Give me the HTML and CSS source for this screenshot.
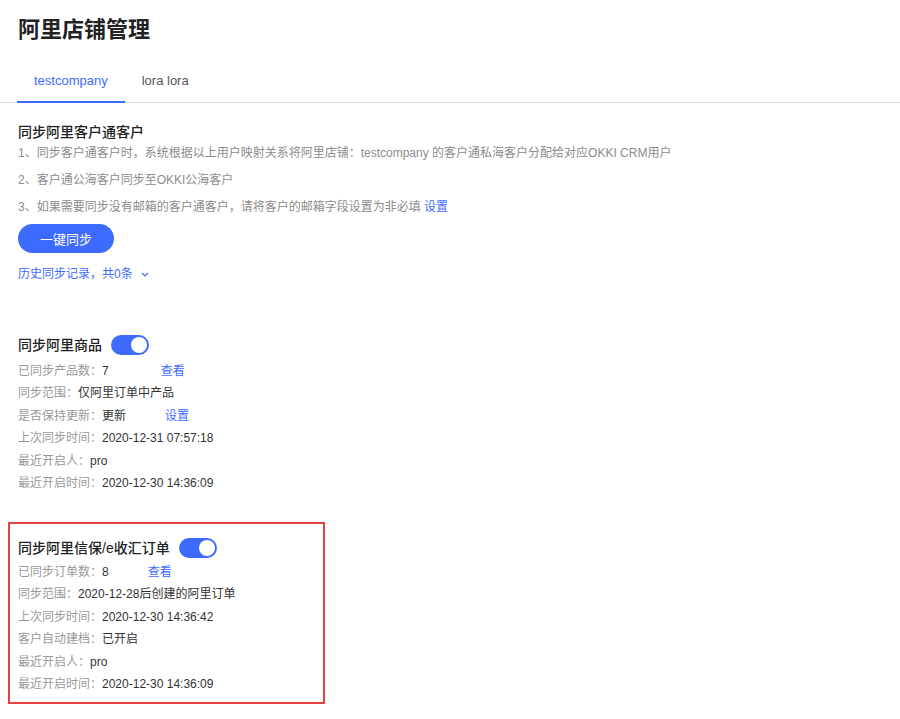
FILE: index.html
```html
<!DOCTYPE html>
<html lang="zh-CN">
<head>
  <meta charset="UTF-8" />
  <meta name="viewport" content="width=device-width, initial-scale=1.0" />
  <title>阿里店铺管理</title>
  <link rel="stylesheet" href="styles.css">
</head>
<body>
  <h1 class="page-title">阿里店铺管理</h1>

  <div class="tabs">
    <div class="tab active">testcompany</div>
    <div class="tab">lora lora</div>
  </div>

  <div class="content">
    <!-- 客户通 -->
    <section class="block customers">
      <h3 class="block-title">同步阿里客户通客户</h3>
      <p class="tip first">1、同步客户通客户时，系统根据以上用户映射关系将阿里店铺：testcompany 的客户通私海客户分配给对应OKKI CRM用户</p>
      <p class="tip">2、客户通公海客户同步至OKKI公海客户</p>
      <p class="tip">3、如果需要同步没有邮箱的客户通客户，请将客户的邮箱字段设置为非必填 <a class="link">设置</a></p>
      <button class="btn-primary">一键同步</button>
      <a class="history">历史同步记录，共0条
        <svg width="8" height="5" viewBox="0 0 8 5"><path d="M1 1 L4 4 L7 1" fill="none" stroke="currentColor" stroke-width="1.2"/></svg>
      </a>
    </section>

    <!-- 商品 -->
    <section class="block goods">
      <div class="block-head">
        <h3 class="block-title">同步阿里商品</h3>
        <span class="switch on"></span>
      </div>
      <div class="row"><span class="label">已同步产品数：</span><span class="value">7</span><a class="link far">查看</a></div>
      <div class="row"><span class="label">同步范围：</span><span class="value">仅阿里订单中产品</span></div>
      <div class="row"><span class="label">是否保持更新：</span><span class="value">更新</span><a class="link near">设置</a></div>
      <div class="row"><span class="label">上次同步时间：</span><span class="value">2020-12-31 07:57:18</span></div>
      <div class="row"><span class="label">最近开启人：</span><span class="value">pro</span></div>
      <div class="row"><span class="label">最近开启时间：</span><span class="value">2020-12-30 14:36:09</span></div>
    </section>

    <!-- 订单 -->
    <section class="block orders highlight">
      <div class="block-head">
        <h3 class="block-title">同步阿里信保/e收汇订单</h3>
        <span class="switch on"></span>
      </div>
      <div class="row"><span class="label">已同步订单数：</span><span class="value">8</span><a class="link near">查看</a></div>
      <div class="row"><span class="label">同步范围：</span><span class="value">2020-12-28后创建的阿里订单</span></div>
      <div class="row"><span class="label">上次同步时间：</span><span class="value">2020-12-30 14:36:42</span></div>
      <div class="row"><span class="label">客户自动建档：</span><span class="value">已开启</span></div>
      <div class="row"><span class="label">最近开启人：</span><span class="value">pro</span></div>
      <div class="row"><span class="label">最近开启时间：</span><span class="value">2020-12-30 14:36:09</span></div>
    </section>
  </div>
</body>
</html>
```

FILE: styles.css
```css
body {
  margin: 0;
  font-family: "Liberation Sans", "Noto Sans CJK SC", sans-serif;
  color: #333;
  background: #fff;
}

.page-title {
  margin: 0;
  padding: 15px 18px 0;
  font-size: 22px;
  line-height: 30px;
  font-weight: 600;
  color: #222;
}

/* タブ */
.tabs {
  display: flex;
  margin-top: 16px;
  padding-left: 17px;
  border-bottom: 1px solid #e0e0e0;
}
.tab {
  padding: 0 17px;
  font-size: 13px;
  line-height: 40px;
  color: #555;
  border-bottom: 2px solid transparent;
  margin-bottom: -1px;
}
.tab.active {
  color: #3e6bff;
  border-bottom-color: #3e6bff;
}

.content {
  padding: 0 18px;
}

.block-title {
  margin: 0;
  font-size: 14px;
  line-height: 20px;
  font-weight: 500;
  color: #222;
}

.customers {
  padding-top: 19px;
}
.tip {
  margin: 7px 0 0;
  font-size: 12px;
  line-height: 20px;
  color: #8c8c8c;
}
.tip.first {
  margin-top: 1px;
}

.link {
  color: #3e6bff;
  cursor: pointer;
}
.link.near {
  margin-left: 39px;
}
.link.far {
  margin-left: 52px;
}

.btn-primary {
  display: block;
  margin-top: 7px;
  width: 96px;
  height: 29px;
  border: none;
  border-radius: 15px;
  background-color: #3e6bff;
  color: #fff;
  font-family: inherit;
  font-size: 13px;
  cursor: pointer;
}

.history {
  display: flex;
  align-items: center;
  gap: 8px;
  margin-top: 11px;
  font-size: 12px;
  line-height: 20px;
  color: #3e6bff;
  cursor: pointer;
}

/* 同期ブロック */
.goods {
  margin-top: 51px;
}
.block-head {
  display: flex;
  align-items: center;
  gap: 9px;
  height: 20px;
  margin-bottom: 5px;
}
.switch {
  display: inline-flex;
  justify-content: flex-end;
  box-sizing: border-box;
  width: 38px;
  height: 20px;
  padding: 2px;
  border-radius: 10px;
  background-color: #ccc;
}
.switch::after {
  content: "";
  display: block;
  width: 16px;
  height: 16px;
  border-radius: 50%;
  background: #fff;
}
.switch.on {
  background-color: #3e6bff;
}

.row {
  font-size: 12px;
  line-height: 22.4px;
}
.label {
  color: #999;
}
.value {
  color: #333;
}

.highlight {
  box-sizing: border-box;
  width: 317px;
  margin: 27.5px 0 0 -10px;
  padding: 14px 8px 7px;
  border: 2px solid #e8403e;
}
.highlight .block-head {
  margin-bottom: 3px;
}
```
